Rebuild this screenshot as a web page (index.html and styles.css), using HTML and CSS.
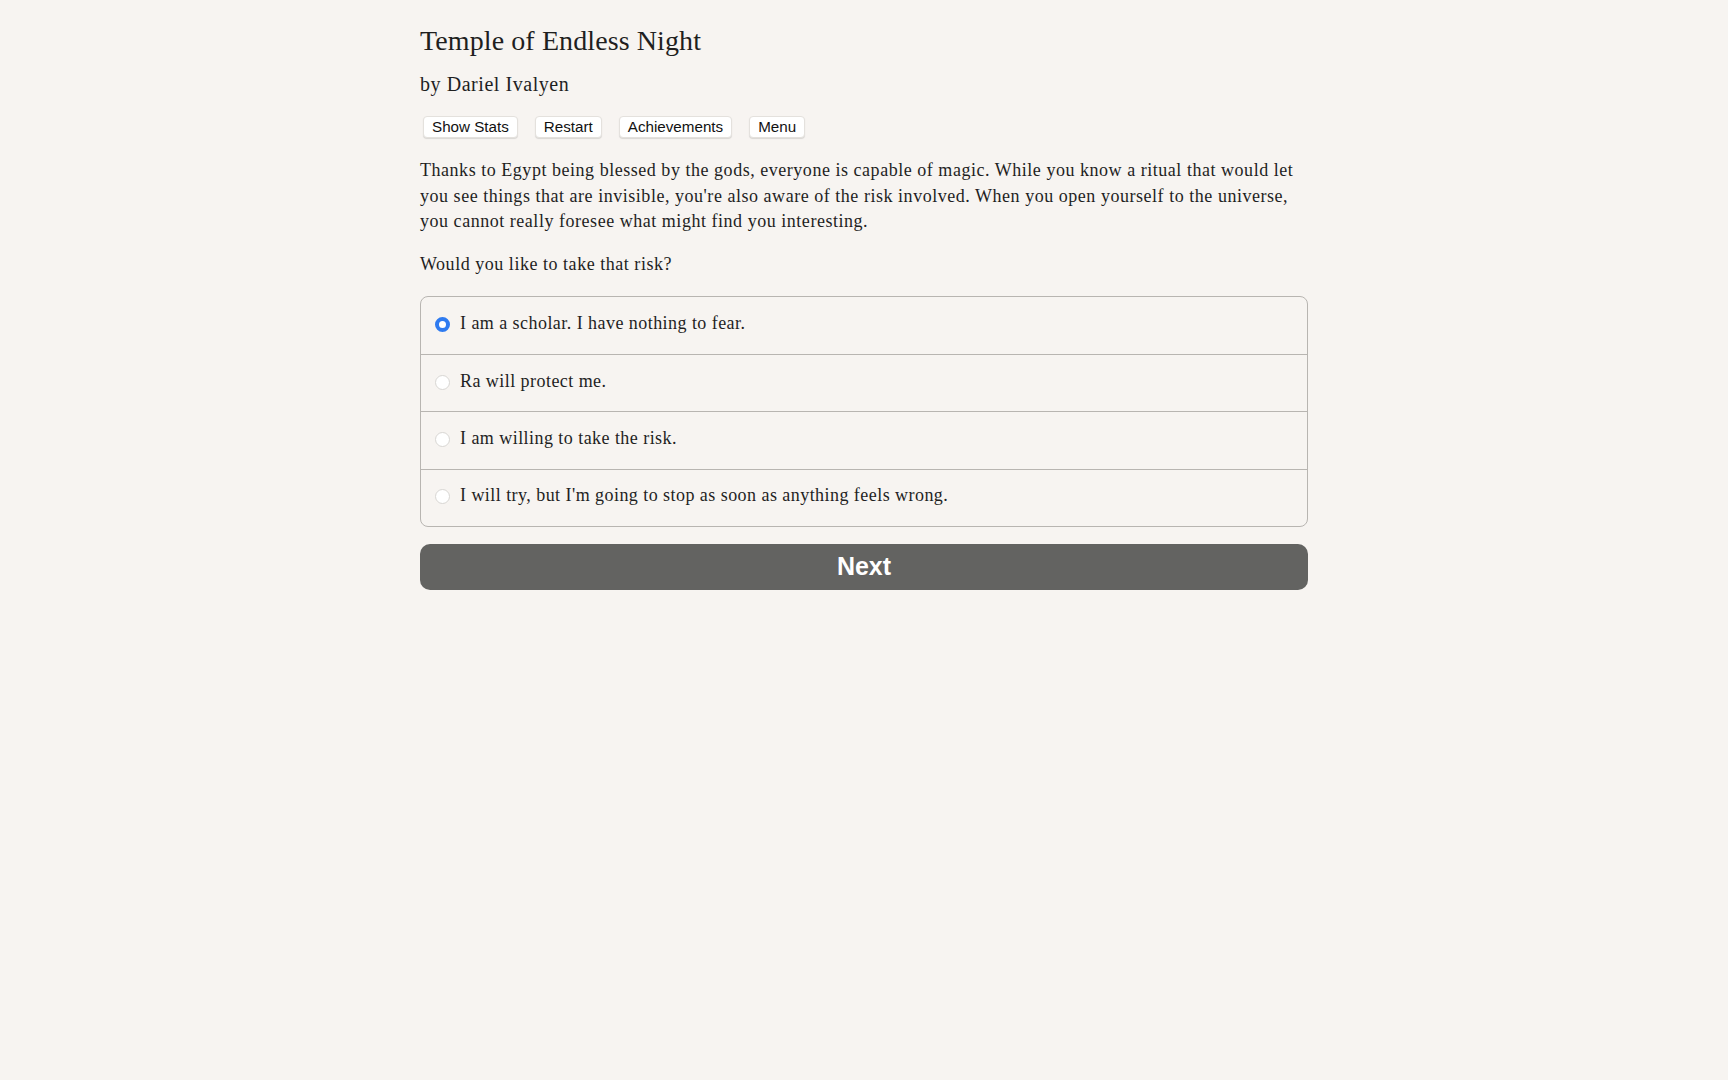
FILE: index.html
```html
<!DOCTYPE html>
<html lang="en">
<head>
<meta charset="utf-8">
<title>Temple of Endless Night</title>
<link rel="stylesheet" href="styles.css">
</head>
<body>
<main class="page">
  <h1 class="title">Temple of Endless Night</h1>
  <h2 class="byline">by Dariel Ivalyen</h2>
  <nav class="toolbar">
    <button class="tool-btn">Show Stats</button>
    <button class="tool-btn">Restart</button>
    <button class="tool-btn">Achievements</button>
    <button class="tool-btn">Menu</button>
  </nav>
  <p class="story">Thanks to Egypt being blessed by the gods, everyone is capable of magic. While you know a ritual that would let you see things that are invisible, you're also aware of the risk involved. When you open yourself to the universe, you cannot really foresee what might find you interesting.</p>
  <p class="story question">Would you like to take that risk?</p>
  <form class="choices">
    <label class="choice"><span class="radio checked"></span><span class="choice-text">I am a scholar. I have nothing to fear.</span></label>
    <label class="choice"><span class="radio"></span><span class="choice-text">Ra will protect me.</span></label>
    <label class="choice"><span class="radio"></span><span class="choice-text">I am willing to take the risk.</span></label>
    <label class="choice"><span class="radio"></span><span class="choice-text">I will try, but I'm going to stop as soon as anything feels wrong.</span></label>
  </form>
  <button class="next-btn">Next</button>
</main>
</body>
</html>
```
FILE: styles.css
```css
html, body {
  margin: 0;
  padding: 0;
  background: #f7f4f1;
}
body {
  color: #1f1f1f;
  font-family: "Liberation Serif", "Times New Roman", serif;
}
.page {
  width: 888px;
  margin: 0 auto;
  padding-top: 24px;
  display: flex;
  flex-direction: column;
}
.title {
  margin: 0;
  font-weight: normal;
  font-size: 28px;
  line-height: 34px;
  letter-spacing: 0.1px;
}
.byline {
  margin: 13px 0 0;
  font-weight: normal;
  font-size: 20px;
  line-height: 26px;
  letter-spacing: 0.55px;
}
.toolbar {
  display: flex;
  gap: 17px;
  margin-top: 19px;
  padding-left: 3px;
}
.tool-btn {
  font-family: "Liberation Sans", Arial, sans-serif;
  font-size: 15.2px;
  color: #111;
  height: 22px;
  padding: 0 8px;
  background: #ffffff;
  border: 1px solid #e4e1dd;
  border-radius: 4px;
  box-shadow: 0 1px 1px rgba(0,0,0,0.12);
  line-height: 20px;
}
.story {
  margin: 20px 0 0;
  font-size: 18px;
  line-height: 25.5px;
  letter-spacing: 0.53px;
}
.question {
  margin-top: 17px;
}
.choices {
  margin-top: 19px;
  border: 1px solid #b8b5b1;
  border-radius: 8px;
  display: flex;
  flex-direction: column;
}
.choice {
  display: flex;
  align-items: center;
  height: 57.2px;
  box-sizing: border-box;
  padding: 0 0 3px 14px;
  font-size: 18px;
  line-height: 25.5px;
  letter-spacing: 0.45px;
  border-top: 1px solid #b8b5b1;
}
.choice:first-child {
  border-top: none;
}
.radio {
  width: 15px;
  height: 15px;
  box-sizing: border-box;
  border-radius: 50%;
  background: #ffffff;
  border: 1px solid #d8d6d3;
  margin-right: 10px;
  flex-shrink: 0;
  margin-top: 1px;
}
.radio.checked {
  background: #ffffff;
  border: 4.5px solid #2f7bf0;
}
.next-btn {
  margin-top: 17px;
  height: 46px;
  border: none;
  border-radius: 10px;
  background: #636361;
  color: #ffffff;
  font-family: "Liberation Sans", Arial, sans-serif;
  font-weight: bold;
  font-size: 25px;
}
```
